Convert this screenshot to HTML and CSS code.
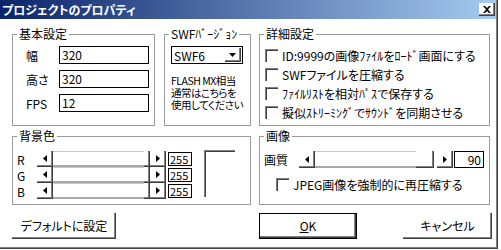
FILE: index.html
```html
<!DOCTYPE html>
<html lang="ja">
<head>
  <meta charset="UTF-8">
  <title>プロジェクトのプロパティ</title>
  <link rel="stylesheet" href="styles.css">
</head>
<body>
  <div class="window">
    <div class="titlebar">
      <span class="title">プロジェクトのプロパティ</span>
      <span class="close">
        <svg width="8" height="7" viewBox="0 0 8 7"><path d="M0 0h2l2 2 2-2h2L5 3.5 8 7H6L4 5 2 7H0l3-3.5z" fill="#000"/></svg>
      </span>
    </div>

    <div class="client">
      <div class="row row-top">
        <fieldset class="group g-basic">
          <legend>基本設定</legend>
          <div class="fields">
            <label>幅</label><span class="edit">320</span>
            <label>高さ</label><span class="edit">320</span>
            <label>FPS</label><span class="edit">12</span>
          </div>
        </fieldset>

        <fieldset class="group g-swf">
          <legend>SWFﾊﾞｰｼﾞｮﾝ</legend>
          <div class="combo">
            <span class="combo-text">SWF6</span>
            <span class="drop"><svg width="7" height="4" viewBox="0 0 7 4"><path d="M0 0h7L3.5 4z" fill="#000"/></svg></span>
          </div>
          <p class="note">FLASH MX相当<br>通常はこちらを<br>使用してください</p>
        </fieldset>

        <fieldset class="group g-detail">
          <legend>詳細設定</legend>
          <ul class="checks">
            <li><span class="check"></span>ID:9999の画像ﾌｧｲﾙをﾛｰﾄﾞ画面にする</li>
            <li><span class="check"></span>SWFファイルを圧縮する</li>
            <li><span class="check"></span>ﾌｧｲﾙﾘｽﾄを相対ﾊﾟｽで保存する</li>
            <li><span class="check"></span>擬似ｽﾄﾘｰﾐﾝｸﾞでｻｳﾝﾄﾞを同期させる</li>
          </ul>
        </fieldset>
      </div>

      <div class="row row-mid">
        <fieldset class="group g-bg">
          <legend>背景色</legend>
          <div class="bg-body">
            <div class="rgb">
              <span class="ch">R</span>
              <div class="scroll">
                <span class="sb-btn"><svg width="4" height="7" viewBox="0 0 4 7"><path d="M4 0v7L0 3.5z"/></svg></span>
                <span class="sb-track"></span>
                <span class="sb-thumb thin"></span>
                <span class="sb-btn"><svg width="4" height="7" viewBox="0 0 4 7"><path d="M0 0v7l4-3.5z"/></svg></span>
              </div>
              <span class="val">255</span>

              <span class="ch">G</span>
              <div class="scroll">
                <span class="sb-btn"><svg width="4" height="7" viewBox="0 0 4 7"><path d="M4 0v7L0 3.5z"/></svg></span>
                <span class="sb-track"></span>
                <span class="sb-thumb thin"></span>
                <span class="sb-btn"><svg width="4" height="7" viewBox="0 0 4 7"><path d="M0 0v7l4-3.5z"/></svg></span>
              </div>
              <span class="val">255</span>

              <span class="ch">B</span>
              <div class="scroll">
                <span class="sb-btn"><svg width="4" height="7" viewBox="0 0 4 7"><path d="M4 0v7L0 3.5z"/></svg></span>
                <span class="sb-track"></span>
                <span class="sb-thumb thin"></span>
                <span class="sb-btn"><svg width="4" height="7" viewBox="0 0 4 7"><path d="M0 0v7l4-3.5z"/></svg></span>
              </div>
              <span class="val">255</span>
            </div>
            <div class="swatch"></div>
          </div>
        </fieldset>

        <fieldset class="group g-image">
          <legend>画像</legend>
          <div class="quality">
            <span class="q-label">画質</span>
            <div class="scroll">
              <span class="sb-btn"><svg width="4" height="7" viewBox="0 0 4 7"><path d="M4 0v7L0 3.5z"/></svg></span>
              <span class="sb-track"></span>
              <span class="sb-thumb"></span>
              <span class="sb-gap"></span>
              <span class="sb-btn"><svg width="4" height="7" viewBox="0 0 4 7"><path d="M0 0v7l4-3.5z"/></svg></span>
            </div>
            <span class="val val-q">90</span>
          </div>
          <div class="jpeg"><span class="check"></span>JPEG画像を強制的に再圧縮する</div>
        </fieldset>
      </div>

      <div class="row buttons">
        <button class="btn btn-default">デフォルトに設定</button>
        <button class="btn btn-ok"><u>O</u>K</button>
        <button class="btn btn-cancel">キャンセル</button>
      </div>
    </div>
  </div>
</body>
</html>
```

FILE: styles.css
```css
body {
  margin: 0;
  background: #fff;
  font-family: "Noto Sans CJK JP", "Liberation Sans", sans-serif;
  font-size: 12px;
  font-feature-settings: "palt";
  color: #000;
}
.window {
  width: 498px;
  height: 249px;
  box-sizing: border-box;
  border-right: 1px solid #404040;
  border-bottom: 1px solid #404040;
  box-shadow: inset -1px -1px 0 #808080;
  background: #fff;
}
.titlebar {
  height: 19px;
  margin-right: 1px;
  background: linear-gradient(to right, #0a246a, #a6caf0);
  display: flex;
  align-items: center;
  justify-content: space-between;
  padding: 0 1px 0 2px;
}
.title {
  color: #fff;
  font-weight: bold;
  line-height: 19px;
}
.close {
  width: 16px;
  height: 13px;
  box-sizing: border-box;
  background: #fff;
  box-shadow: inset -1px -1px 0 #404040, inset -2px -2px 0 #808080;
  display: flex;
  align-items: center;
  justify-content: center;
  padding: 0 1px 1px 0;
}
.close svg { display: block; }

.client {
  padding: 9px 0 0 12px;
}
.row {
  display: flex;
}

/* group boxes */
.group {
  margin: 0;
  padding: 0;
  min-width: 0;
  box-sizing: border-box;
  border: 1px solid #9a9a9a;
}
.group legend {
  margin-left: 4px;
  padding: 0 2px;
  line-height: 12px;
  white-space: nowrap;
}
.row-top .group { height: 98px; }
.g-basic { width: 143px; margin-right: 9px; }
.g-swf { width: 87px; margin-right: 8px; }
.g-detail { width: 231px; }

.fields {
  display: grid;
  grid-template-columns: 33px 90px;
  grid-auto-rows: 18px;
  row-gap: 6px;
  align-items: center;
  padding: 6px 0 0 13px;
}
.edit, .val {
  box-sizing: border-box;
  height: 18px;
  border: 1px solid #000;
  padding: 0 2px;
  line-height: 16px;
  background: #fff;
}

.combo {
  width: 72px;
  height: 18px;
  box-sizing: border-box;
  margin: 6px 0 0 6px;
  border: 1px solid #000;
  display: flex;
  align-items: center;
  justify-content: space-between;
  padding: 0 1px 0 2px;
}
.drop {
  width: 16px;
  height: 14px;
  box-sizing: border-box;
  box-shadow: inset -1px -1px 0 #404040, inset -2px -2px 0 #808080;
  display: flex;
  align-items: center;
  justify-content: center;
  padding: 0 1px 1px 0;
}
.drop svg { display: block; }
.note {
  margin: 11px 0 0 6px;
  font-size: 10.5px;
  letter-spacing: -0.5px;
  line-height: 12px;
  white-space: nowrap;
}

.checks {
  list-style: none;
  margin: 0;
  padding: 9px 0 0 5px;
}
.checks li, .jpeg {
  display: flex;
  align-items: center;
  gap: 4px;
  height: 13px;
  margin-bottom: 6px;
  white-space: nowrap;
}
.check {
  width: 13px;
  height: 13px;
  box-sizing: border-box;
  flex: none;
  background: #fff;
  box-shadow: inset 1px 1px 0 #808080, inset 2px 2px 0 #404040;
}

/* middle row */
.row-mid { margin-top: 4px; }
.row-mid .group { height: 75px; }
.g-bg { width: 239px; margin-right: 8px; }
.g-image { width: 231px; }

.bg-body {
  display: flex;
  align-items: flex-start;
  padding: 9px 0 0 4px;
}
.rgb {
  display: grid;
  grid-template-columns: 18px 129px 24px;
  grid-auto-rows: 16px;
  column-gap: 2px;
  align-items: center;
}
.rgb .val {
  height: 14px;
  line-height: 12px;
  font-size: 11px;
  padding: 0 1px;
}
.swatch {
  width: 31px;
  height: 47px;
  box-sizing: border-box;
  margin: -1px 0 0 12px;
  box-shadow: inset 1px 1px 0 #808080, inset 2px 2px 0 #404040;
}

.scroll {
  display: flex;
  height: 16px;
}
.sb-btn, .sb-thumb {
  flex: none;
  width: 16px;
  box-sizing: border-box;
  background: #fff;
  box-shadow: inset -1px -1px 0 #404040, inset -2px -2px 0 #808080;
  display: flex;
  align-items: center;
  justify-content: center;
  padding: 0 1px 1px 0;
}
.sb-btn svg { display: block; fill: #000; }
.sb-track {
  flex: 1;
  border-top: 1px solid #c8c8c8;
  border-bottom: 2px solid #a8a8a8;
}
.sb-gap { width: 3px; flex: none; }
.sb-thumb.thin { width: 6px; }
.sb-thumb { width: 18px; }

.quality {
  display: flex;
  align-items: center;
  padding: 9px 0 0 4px;
  height: 17px;
}
.q-label { width: 35px; }
.quality .scroll { width: 154px; height: 17px; }
.val-q {
  width: 30px;
  height: 17px;
  margin-left: 1px;
  text-align: right;
  line-height: 15px;
}
.jpeg {
  margin: 10px 0 0 16px;
}

/* buttons */
.buttons {
  margin-top: 8px;
}
.btn {
  height: 26px;
  box-sizing: border-box;
  border: none;
  padding: 0 0 1px 0;
  background: #fff;
  font: inherit;
  box-shadow: inset -1px -1px 0 #404040, inset -2px -2px 0 #808080;
}
.btn-default { width: 104px; margin-right: 143px; }
.btn-ok {
  width: 98px;
  margin-right: 46px;
  border: 1px solid #000;
}
.btn-cancel { width: 89px; }
```
